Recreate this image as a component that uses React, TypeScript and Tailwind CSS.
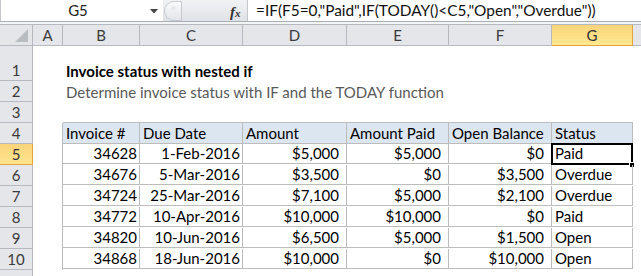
import React from "react";

const font = { fontFamily: "Lato, Carlito, 'Open Sans', sans-serif" };

const cols = [
  { k: "A", w: "w-[30px]" },
  { k: "B", w: "w-[77px]" },
  { k: "C", w: "w-[103px]" },
  { k: "D", w: "w-[104px]" },
  { k: "E", w: "w-[102px]" },
  { k: "F", w: "w-[103px]" },
  { k: "G", w: "w-[81px]" },
];

const data = [
  ["34628", "1-Feb-2016", "$5,000", "$5,000", "$0", "Paid"],
  ["34676", "5-Mar-2016", "$3,500", "$0", "$3,500", "Overdue"],
  ["34724", "25-Mar-2016", "$7,100", "$5,000", "$2,100", "Overdue"],
  ["34772", "10-Apr-2016", "$10,000", "$10,000", "$0", "Paid"],
  ["34820", "10-Jun-2016", "$6,500", "$5,000", "$1,500", "Open"],
  ["34868", "18-Jun-2016", "$10,000", "$0", "$10,000", "Open"],
];

const headers = ["Invoice #", "Due Date", "Amount", "Amount Paid", "Open Balance", "Status"];

// padding per data column (B..G): ids and dates hug the edge, currency keeps a trailing gap
const pads = ["pr-[2px]", "pr-[2px]", "pr-[7px]", "pr-[7px]", "pr-[7px]", "pl-[3px]"];

function RowHead({ n, h, active }: { n: string; h: string; active?: boolean }) {
  return (
    <div
      className={`${h} w-[33px] shrink-0 flex items-end justify-center pb-[1px] border-r border-b text-[15px] leading-[18px] ${
        active
          ? "bg-gradient-to-b from-[#f9d47a] to-[#ffe590] border-[#e3a43c] text-[#333]"
          : "bg-[#e4e6e9] border-[#b6bac0] text-[#3b3b3b]"
      }`}
    >
      {n}
    </div>
  );
}

function FormulaBar() {
  return (
    <div className="flex h-[22px] border-b border-[#a9aeb4] bg-white">
      <div className="w-[163px] flex items-center relative border-l border-[#c4c8cc]">
        <span className="w-full text-center text-[15px] text-[#222] pr-[8px]">G5</span>
        <svg className="absolute left-[149px] top-[9px]" width="8" height="5" viewBox="0 0 8 5">
          <path d="M0 0h8L4 4.5z" fill="#444" />
        </svg>
      </div>
      <div className="w-[85px] relative bg-gradient-to-b from-[#f1f2f4] to-[#dfe2e6] border-r border-[#c3c7cc]">
        <div className="absolute left-[1px] top-[1px] w-[18px] h-[20px] rounded-l-full bg-gradient-to-b from-[#fbfbfc] to-[#e2e4e8] border border-[#c6cace]">
          <div className="absolute left-[6px] top-[4px] w-[5px] h-[4px] rounded-full bg-[#e7e8ea]" />
        </div>
        <span
          className="absolute left-[67px] top-[1px] text-[15px] italic font-bold text-[#333]"
          style={{ fontFamily: "'Liberation Serif', serif" }}
        >
          f<span className="text-[11px]">x</span>
        </span>
      </div>
      <div className="flex-1 flex items-center pl-[8px] text-[15.4px] text-[#111] whitespace-nowrap">
        =IF(F5=0,"Paid",IF(TODAY()&lt;C5,"Open","Overdue"))
      </div>
    </div>
  );
}

function ColHeaders() {
  return (
    <div className="flex h-[22px] border-t border-[#b6bac0]">
      <div className="w-[33px] shrink-0 relative bg-[#e4e6e9] border-r border-b border-[#b6bac0]">
        <svg className="absolute right-[4px] bottom-[3px]" width="13" height="13" viewBox="0 0 13 13">
          <path d="M13 0V13H0z" fill="#b9bdc2" />
        </svg>
      </div>
      {cols.map((c) => (
        <div
          key={c.k}
          className={`${c.w} shrink-0 flex items-end justify-center pb-[1px] border-r border-b text-[15px] leading-[18px] ${
            c.k === "G"
              ? "bg-gradient-to-b from-[#f9d47a] to-[#ffe891] border-[#e3a43c] text-[#333]"
              : "bg-[#e4e6e9] border-[#b6bac0] text-[#3b3b3b]"
          }`}
        >
          {c.k}
        </div>
      ))}
      <div className="flex-1 bg-[#e4e6e9] border-b border-[#b6bac0]" />
    </div>
  );
}

function Cell({
  w,
  children,
  cls = "",
  align = "justify-end",
}: {
  w: string;
  children?: React.ReactNode;
  cls?: string;
  align?: string;
}) {
  return (
    <div className={`${w} shrink-0 flex items-end ${align} pb-[1px] text-[15px] leading-[18px] whitespace-nowrap ${cls}`}>
      {children}
    </div>
  );
}

export default function App() {
  const tb = "border-[#bcbcbc]";
  return (
    <div className="w-[641px] h-[276px] overflow-hidden bg-white text-black" style={font}>
      <FormulaBar />
      <div className="h-[2px] bg-[#f3f4f5]" />
      <ColHeaders />

      {/* row 1 */}
      <div className="flex h-[35px]">
        <RowHead n="1" h="h-[35px]" />
        <Cell w="w-[30px]" />
        <Cell w="w-[300px]" align="justify-start" cls="font-bold pl-[3px]">
          Invoice status with nested if
        </Cell>
      </div>

      {/* row 2 */}
      <div className="flex h-[21px]">
        <RowHead n="2" h="h-[21px]" />
        <Cell w="w-[30px]" />
        <Cell w="w-[450px]" align="justify-start" cls="text-[#595959] pl-[3px]">
          Determine invoice status with IF and the TODAY function
        </Cell>
      </div>

      {/* row 3 */}
      <div className="flex h-[21px]">
        <RowHead n="3" h="h-[21px]" />
        <Cell w="w-[30px]" />
        {cols.slice(1).map((c) => (
          <div key={c.k} className={`${c.w} shrink-0 border-b ${tb}`} />
        ))}
      </div>

      {/* row 4 headers */}
      <div className="flex h-[21px]">
        <RowHead n="4" h="h-[21px]" />
        <Cell w="w-[30px]" cls={`border-r ${tb}`} />
        {cols.slice(1).map((c, i) => (
          <Cell key={c.k} w={c.w} align="justify-start" cls={`bg-[#dce6f1] border-r border-b ${tb} pl-[3px]`}>
            {headers[i]}
          </Cell>
        ))}
      </div>

      {data.map((r, ri) => (
        <div key={ri} className="flex h-[21px]">
          <RowHead n={String(ri + 5)} h="h-[21px]" active={ri === 0} />
          <Cell w="w-[30px]" cls={`border-r ${tb}`} />
          {cols.slice(1).map((c, ci) => (
            <div key={c.k} className="relative">
              <Cell
                w={c.w}
                align={ci === 5 ? "justify-start" : "justify-end"}
                cls={`border-r border-b ${tb} ${pads[ci]}`}
              >
                {r[ci]}
              </Cell>
              {ri === 0 && ci === 5 && (
                <>
                  <div className="absolute -left-[1px] -top-[1px] w-[82px] h-[22px] border-2 border-black" />
                  <div className="absolute left-[77px] top-[18px] w-[6px] h-[6px] bg-black border border-white" />
                </>
              )}
            </div>
          ))}
        </div>
      ))}

      {/* row 11, only its top sliver is in view */}
      <div className="flex h-[21px]">
        <RowHead n="" h="h-[21px]" />
      </div>
    </div>
  );
}
